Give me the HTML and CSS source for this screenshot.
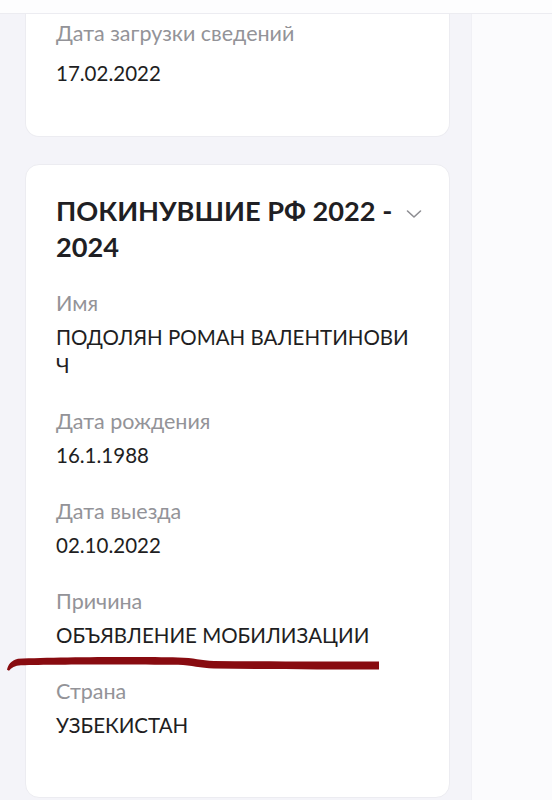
FILE: index.html
```html
<!DOCTYPE html>
<html lang="ru">
<head>
<meta charset="utf-8">
<title>Сведения</title>
<link rel="stylesheet" href="styles.css">
</head>
<body>
<div class="topbar"></div>
<div class="layout">
  <main class="column">
    <section class="card card-cut">
      <div class="field">
        <div class="label">Дата загрузки сведений</div>
        <div class="value">17.02.2022</div>
      </div>
    </section>
    <section class="card">
      <div class="card-head">
        <h2 class="title">ПОКИНУВШИЕ РФ 2022 - 2024</h2>
        <svg class="chevron" width="16" height="10" viewBox="0 0 16 10"><path d="M1.5 2 L8 8 L14.5 2" fill="none" stroke="#8d8d92" stroke-width="1.6" stroke-linecap="round" stroke-linejoin="round"/></svg>
      </div>
      <div class="field">
        <div class="label">Имя</div>
        <div class="value value-name">ПОДОЛЯН РОМАН ВАЛЕНТИНОВИЧ</div>
      </div>
      <div class="field">
        <div class="label">Дата рождения</div>
        <div class="value">16.1.1988</div>
      </div>
      <div class="field">
        <div class="label">Дата выезда</div>
        <div class="value">02.10.2022</div>
      </div>
      <div class="field field-marked">
        <div class="label">Причина</div>
        <div class="value">ОБЪЯВЛЕНИЕ МОБИЛИЗАЦИИ</div>
        <svg class="marker" width="380" height="18" viewBox="0 0 380 18"><path d="M1 15.8 C2 11 5 6.5 12 4.8 C50 3 130 2.6 172 3.4 C188 3.8 195 6.2 208 7 C260 7.6 320 7.6 373 7.6 L373 15.6 C320 15.6 260 15.3 208 14.6 C194 14 186 11.5 172 10.8 C130 10.2 50 10.2 15 11.2 C9 11.6 5 13.5 3 16.8 Z" fill="#880b10"/></svg>
      </div>
      <div class="field">
        <div class="label">Страна</div>
        <div class="value">УЗБЕКИСТАН</div>
      </div>
    </section>
  </main>
  <aside class="side"></aside>
</div>
</body>
</html>
```
FILE: styles.css
```css
* { box-sizing: border-box; }
html, body {
  margin: 0;
  padding: 0;
  height: 800px;
  overflow: hidden;
}
body {
  font-family: "Lato", "Noto Sans", sans-serif;
  background: #f4f4f9;
  color: #1e1e22;
}
.topbar {
  height: 14px;
  background: #fdfdfe;
  border-bottom: 1px solid #ececf1;
}
.layout {
  display: flex;
  height: 786px;
}
.column {
  width: 471px;
  padding: 0 21px 0 25px;
  background: #f4f4f9;
  display: flex;
  flex-direction: column;
  gap: 27px;
}
.side {
  flex: 1;
  background: #fbfbfd;
  border-left: 1px solid #f0f0f5;
}
.card {
  background: #fff;
  border: 1px solid #ececf1;
  border-radius: 14px;
  padding: 28px 30px 58px 30px;
}
.card-cut {
  border-top: none;
  border-radius: 0 0 14px 14px;
  padding: 6px 30px 0 30px;
  height: 123px;
  flex: none;
}
.card-cut .value {
  margin-top: 13px;
}
.card-head {
  display: flex;
  align-items: flex-start;
  gap: 8px;
  margin-bottom: 25px;
}
.title {
  flex: 1;
  margin: 0;
  font-size: 27.2px;
  line-height: 36px;
  font-weight: 700;
  color: #1f1f24;
}
.chevron {
  flex: none;
  margin-top: 16px;
  margin-right: -3px;
}
.field + .field {
  margin-top: 29px;
}
.label {
  font-size: 21.5px;
  line-height: 26px;
  color: #939398;
}
.value {
  margin-top: 7px;
  font-size: 20.5px;
  line-height: 28px;
  color: #1e1e22;
}
.value-name {
  max-width: 358px;
  word-break: break-all;
}
.field-marked {
  position: relative;
}
.marker {
  position: absolute;
  left: -50px;
  top: 66px;
}
```
